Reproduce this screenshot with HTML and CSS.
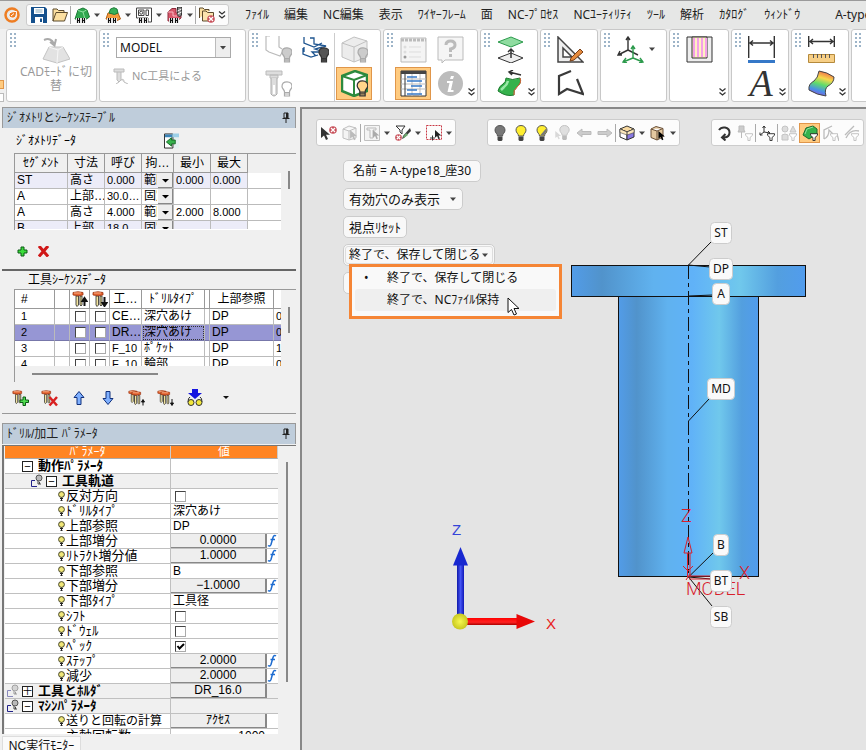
FILE: index.html
```html
<!DOCTYPE html>
<html lang="ja">
<head>
<meta charset="utf-8">
<title>NC MODEL</title>
<link rel="stylesheet" href="styles.css">
</head>
<body>
<svg class="defs" aria-hidden="true">
  <symbol id="chev" viewBox="0 0 7 8"><path d="M.5 .5L3.500 3L6.500 .5M.5 4.500L3.500 7L6.500 4.500" fill="none" stroke="#333" stroke-width="1.300"/></symbol>
  <symbol id="tri" viewBox="0 0 8 8"><path d="M1 2.500H7L4 6Z" fill="#444"/></symbol>
  <symbol id="pin" viewBox="0 0 10 12"><path d="M3 1H7V6H3ZM1.500 6.500H8.500M5 7V11" fill="none" stroke="#222"/><path d="M6 1V6" stroke="#222" stroke-width="2"/></symbol>
  <symbol id="bulb" viewBox="0 0 16 16"><path d="M8 0.500C4.500 .5 3 3 3 5.200C3 8 5.500 8.500 5.500 11H10.500C10.500 8.500 13 8 13 5.200C13 3 11.500 .5 8 .5Z" stroke="#555"/><path d="M5.500 11.500H10.500V15L9.500 16H6.500L5.500 15Z" fill="#444"/></symbol>
  <symbol id="gbulb" viewBox="0 0 12 16"><path d="M6 .8C2.500 .8 1 3 1 5.500C1 8 3.500 8.500 3.500 11V15H8.500V11C8.500 8.500 11 8 11 5.500C11 3 9.500 .8 6 .8ZM3.500 11.500H8.500M3.500 13H8.500" stroke-width="1.200"/></symbol>
  <symbol id="leaf" viewBox="0 0 7 11"><circle cx="3.500" cy="3.500" r="2.900" fill="#f0e678" stroke="#45452a"/><path d="M3.500 6.500V10M2 7.500H5M2.500 9.500H4.500" stroke="#222" fill="none"/></symbol>
  <symbol id="link" viewBox="0 0 14 14"><circle cx="9" cy="4" r="3" fill="#b9b9b9" stroke="#555"/><path d="M8 7V10H11M9.500 8V10" stroke="#444" fill="none"/><path d="M5 6.500H1.500V12.500H7" stroke="currentColor" fill="none"/></symbol>
  <symbol id="hh" viewBox="0 0 16 16"><path d="M3.500 11V16M5.500 11V16M3 13.500H6M8.500 11V16M10.500 11V16M8 13.500H11" stroke="#fff" stroke-width="3"/><path d="M3.500 11V16M5.500 11V16M3 13.500H6M8.500 11V16M10.500 11V16M8 13.500H11" stroke="#111" stroke-width="1.200"/></symbol>
  <symbol id="fold" viewBox="0 0 16 16"><path d="M1 14V2H5L6.500 3.500H12V6M1 14L4 5.500H15.500L12.500 14Z" fill="#fbdfa0" stroke="#5b4a2d" stroke-linejoin="round"/></symbol>
  <symbol id="cur" viewBox="0 0 10 14"><path d="M0 0V11L3 8.500L5 13L7 12L5 7.800H9Z"/></symbol>
  <symbol id="tool" viewBox="0 0 16 16"><path d="M4 5H6.500V14L5 15.500L4 14ZM8 5H10V14L9 15L8 14Z" fill="#f2e4a0" stroke="#222" stroke-width=".8"/><path d="M1 1.500Q6 0 11 1.500V4Q6 5.500 1 4Z" fill="#e5622e" stroke="#9a3412" stroke-width=".8"/><path d="M2 2H9" stroke="#f8b08a"/></symbol>
  <symbol id="fn" viewBox="0 0 10 13"><path d="M9 2Q7 .5 6 3.500L4 10.500Q3 13 1 11.500M3.500 5.500H8" fill="none" stroke="#1c6bd0" stroke-width="1.500"/></symbol>
  <symbol id="funnel" viewBox="0 0 9 9"><path d="M.5 .8H8.500V2.500L5.700 5V8.500H3.300V5L.5 2.500Z" fill="#fff"/></symbol>
  <symbol id="xdot" viewBox="0 0 8 8"><circle cx="4" cy="4" r="3.800" fill="#c8505a"/><path d="M2 2L6 6M6 2L2 6" stroke="#fff" stroke-width="1.300"/></symbol>
</svg>

<div class="app">
<header class="top">
  <svg class="logo" viewBox="0 0 16 16"><circle cx="8" cy="8" r="6.500" fill="none" stroke="#ee7d22" stroke-width="2.500"/><path d="M5 8.500C5 5 8 4.500 12.500 4.500C12.500 8.500 11.500 11 8.500 11C6.500 11 5.500 10 5 8.500ZM7 9L10 6.500" fill="#ee7d22" stroke="#fff"/></svg>
  <div class="bar quick">
    <button class="ib" aria-label="保存"><svg viewBox="0 0 16 16"><path d="M0 0H14L16 2V16H0Z" fill="#14508c"/><path d="M3 1H13V7H3ZM4 10H12V16H4Z" fill="#fff"/><path d="M4.500 3H11.500M4.500 5H11.500" stroke="#8ab"/><path d="M9 11.500H11V15H9Z" fill="#14508c"/></svg></button>
    <button class="ib" aria-label="開く"><svg><use href="#fold"/></svg></button><i class="sep"></i>
    <button class="ib" aria-label="部品"><svg viewBox="0 0 16 16"><path d="M1 12L4 3L9 1L13 3L15.500 10L11 13Z" fill="#2fa84f" stroke="#1c7a36"/><path d="M4 3.500L9 5L12.500 3M9 5L11 12" stroke="#8fe0a0" fill="none"/><use href="#hh"/></svg></button><button class="dd" aria-label="部品の一覧"><svg><use href="#tri"/></svg></button>
    <button class="ib" aria-label="素材"><svg viewBox="0 0 16 16"><path d="M1 12L3 6H13L15.500 12L11 14Z" fill="#f39a3c" stroke="#b3621a"/><path d="M4 6L5.500 2L9 .7L12 2L13 6L9.500 7.500Z" fill="#37b058" stroke="#1c7a36"/><use href="#hh"/></svg></button><button class="dd" aria-label="素材の一覧"><svg><use href="#tri"/></svg></button>
    <button class="ib" aria-label="図面"><svg viewBox="0 0 16 16"><path d="M.5 1H15.500V15H12V11H.5Z" fill="#fff" stroke="#444"/><path d="M2.500 3H8V8.500H2.500ZM10 3H12.500V8.500H10Z" fill="none" stroke="#444"/><circle cx="5.200" cy="5.700" r="1.500" fill="none" stroke="#444"/><use href="#hh"/></svg></button><button class="dd" aria-label="図面の一覧"><svg><use href="#tri"/></svg></button>
    <button class="ib" aria-label="加工"><svg viewBox="0 0 16 16"><path d="M1 5L5 1.500H9V6H14V11L10 14H1Z" fill="#d9576b" stroke="#8c2c3c"/><path d="M1 5H6V9H10" stroke="#f6b8c0" fill="none"/><path d="M10.500 0H14.500V8L12.500 10L10.500 8Z" fill="#888" stroke="#333"/><path d="M10.500 4L14.500 2M10.500 7L14.500 5" stroke="#eee"/><use href="#hh"/></svg></button><button class="dd" aria-label="加工の一覧"><svg><use href="#tri"/></svg></button><i class="sep"></i>
    <button class="ib" aria-label="閉じる"><svg viewBox="0 0 16 16"><path d="M.5 11V1H4L5.500 2.500H10V4" fill="#fbdfa0" stroke="#5b4a2d"/><path d="M3.500 14V4H7L8.500 5.500H14.500V14Z" fill="#fbe3ae" stroke="#5b4a2d"/><use href="#xdot" x="8" y="8" width="8" height="8"/></svg></button>
    <button class="dd" aria-label="その他"><svg><use href="#chev"/></svg></button>
  </div>
  <nav class="menu"><a href="#">ﾌｧｲﾙ</a><a href="#">編集</a><a href="#">NC編集</a><a href="#">表示</a><a href="#">ﾜｲﾔｰﾌﾚｰﾑ</a><a href="#">面</a><a href="#">NC-ﾌﾟﾛｾｽ</a><a href="#">NCﾕｰﾃｨﾘﾃｨ</a><a href="#">ﾂｰﾙ</a><a href="#">解析</a><a href="#">ｶﾀﾛｸﾞ</a><a href="#">ｳｨﾝﾄﾞｳ</a><span class="doc">A-type18_座30</span></nav>
</header>

<div class="ribbon">
  <div class="stub"><i class="on"></i><i></i></div>
  <section class="card c-mode"><i class="grip"></i>
    <button class="mode"><svg viewBox="0 0 28 28"><path d="M7 11H21L28 23L15 27L1 23Z" fill="#e2e2e2" stroke="#c2c2c2"/><path d="M7 11L16 14L21 11M16 14L15 27" fill="none" stroke="#f6f6f6"/><path d="M2 4Q9 1 12 8M8 6L12.500 9.500L14 3" fill="none" stroke="#aaa" stroke-width="2"/></svg><span>CADﾓｰﾄﾞに切<br>替</span></button>
  </section>
  <section class="card c-model"><i class="grip"></i>
    <div class="model">
      <select aria-label="モデル"><option>MODEL</option></select>
      <button class="bytool"><svg viewBox="0 0 16 16"><path d="M1 1H11V4H1ZM4 4V12L6 14L8 12V4M8 12Q11 10 11 14M6 14L3 16M11 14L15 16" fill="#ddd" stroke="#bbb"/></svg><span>NC工具による</span></button>
    </div>
  </section>
  <section class="card c-show"><i class="grip"></i>
    <div class="cells two">
      <button aria-label="軌道表示"><svg viewBox="0 0 27 27"><path d="M1 0V14L4 16L15 20L18 15M1 0H5M14 0V11L17 13" fill="none" stroke="#bbb" stroke-width="1.200"/><use href="#gbulb" x="16" y="11" width="12" height="16" fill="#ccc" stroke="#aaa"/></svg></button>
      <button aria-label="全軌道"><svg viewBox="0 0 27 27"><path d="M2 1V7L12 11L20 7M2 16V11M8 2H12V8L24 10L13 13L22 16L10 16L14 20M1 12V18L9 21L16 19" fill="none" stroke="#1f5590" stroke-width="1.300"/><use href="#gbulb" x="16" y="11" width="12" height="16" fill="#555" stroke="#333"/></svg></button>
      <button aria-label="工具表示"><svg viewBox="0 0 27 27"><path d="M1 1H17V5H1ZM5 5H13V8H5Z" fill="#ddd" stroke="#bbb"/><path d="M6 8V24Q9 28 12 24V8" fill="#ddd" stroke="#aaa"/><path d="M8 15H10V24H8Z" fill="#fff"/><use href="#gbulb" x="16" y="11" width="12" height="16" fill="#fff" stroke="#aaa"/></svg></button>
    </div><i class="vsep"></i>
    <div class="cells">
      <button aria-label="素材表示"><svg viewBox="0 0 27 27"><path d="M1 7L13 1L26 5V21L13 26L1 21Z" fill="#ececec" stroke="#c0c0c0"/><path d="M1 7L13 11L26 5M13 11V26" fill="none" stroke="#c0c0c0"/><use href="#gbulb" x="16" y="11" width="12" height="16" fill="#ccc" stroke="#aaa"/></svg></button>
      <button class="active" aria-label="部品表示"><svg viewBox="0 0 27 27"><path d="M1 6L14 1L26 5V21L13 26L1 21Z" fill="#fff" stroke="#2c8a3e" stroke-width="2.500"/><path d="M1 6L13 10L26 5M13 10V26" fill="none" stroke="#2c8a3e" stroke-width="2"/><use href="#gbulb" x="15" y="10" width="13" height="17" fill="#ffd58a" stroke="#333"/></svg></button>
    </div>
  </section>
  <section class="card c-list"><i class="grip"></i>
    <div class="cells two">
      <button aria-label="一覧"><svg viewBox="0 0 27 27"><path d="M1 2H26V26H1Z" fill="#f4f4f4" stroke="#bbb"/><path d="M1 4H26" stroke="#bbb" stroke-width="3" stroke-dasharray="3 1"/><path d="M9 11H21M9 16H21M9 21H21" stroke="#ddd"/><circle cx="5" cy="11" r="1.500" fill="#ddd"/><circle cx="5" cy="16" r="1.500" fill="#ddd"/><circle cx="5" cy="21" r="1.500" fill="#999"/></svg></button>
      <button aria-label="ヘルプ"><svg viewBox="0 0 27 27"><path d="M1 1H26V24H8L5 27V24H1Z" fill="#f5f5f5" stroke="#bbb"/><path d="M9 9Q9 5 13.500 5Q18 5 18 9Q18 12 13.500 13V16" fill="none" stroke="#bbb" stroke-width="3"/><path d="M12 18H15V21H12Z" fill="#bbb"/></svg></button>
      <button class="active" aria-label="表"><svg viewBox="0 0 27 27"><path d="M1 1H26V26H1Z" fill="#fff" stroke="#333"/><path d="M1 2.500H26" stroke="#444" stroke-width="3"/><path d="M1 9H26M1 14H26M1 19H26M12 4V26M20 4V26" stroke="#bbb"/><path d="M5 4V26" stroke="#333"/><path d="M7 7H17M7 11H22M11 16H22M7 20H17M7 24H22" stroke="#3578c8" stroke-width="1.500"/></svg></button>
      <button aria-label="情報"><svg viewBox="0 0 27 27"><circle cx="13.500" cy="13.500" r="12.500" fill="#bcbcbc"/><path d="M14 6H17L16 9H13ZM10 11H16L14 20H16.500V22H10.500L12.500 13H10Z" fill="#fff"/></svg></button>
    </div><svg class="chev"><use href="#chev"/></svg>
  </section>
  <section class="card c-s"><i class="grip"></i>
    <div class="cells">
      <button aria-label="面"><svg viewBox="0 0 27 27"><path d="M1 6L14 1L26 6L14 11Z" fill="#8fdca0" stroke="#2c9a4c"/><path d="M1 22L14 17L26 22L14 27Z" fill="#eee" stroke="#333"/><path d="M14 22V13M11 16L14 13L17 16" fill="none" stroke="#333" stroke-width="1.500"/></svg></button>
      <button aria-label="曲面"><svg viewBox="0 0 27 27"><path d="M9 8Q15 11 23 8Q25 13 20 17Q16 20 17 25Q9 27 1 21Q2 16 6 14Q9 12 9 8Z" fill="#35b24c" stroke="#1c7a2e"/><path d="M11 11Q10 15 7 17L4 20" fill="none" stroke="#9ae8a8" stroke-width="2.500"/><path d="M12 2L24 5M16 0L12 2L15 5" fill="none" stroke="#333" stroke-width="1.500"/><path d="M23 8Q25 13 20 17Q16 20 17 25" fill="none" stroke="#e5603a"/></svg></button>
    </div><svg class="chev"><use href="#chev"/></svg>
  </section>
  <section class="card c-s"><i class="grip"></i>
    <div class="cells">
      <button aria-label="スケッチ"><svg viewBox="0 0 27 27"><path d="M1 1L26 26H1Z" fill="#eee" stroke="#444" stroke-width="1.500"/><path d="M6 12L15 21H6Z" fill="#fff" stroke="#444" stroke-width="1.500"/><path d="M14 22L23 13L26 16L17 24L13 25Z" fill="#e58a3c" stroke="#7a3e14"/></svg></button>
      <button aria-label="折れ線"><svg viewBox="0 0 27 27"><path d="M14 1L2 6V24L10 19L26 24L20 9" fill="none" stroke="#3a3a3a" stroke-width="2.200"/></svg></button>
    </div>
  </section>
  <section class="card c-axis"><i class="grip"></i>
    <div class="cells"><button aria-label="座標系"><svg viewBox="0 0 27 27"><path d="M11 14V1M11 14L1 19M11 14L21 19M9 4L11 1L13 4M3 15L1 19L5 19" fill="none" stroke="#333" stroke-width="1.400"/><path d="M16 22V10M16 22L6 26M16 22L26 26M14 13L16 10L18 13M9 22L6 26L10 27M23 22L26 26L22 27" fill="none" stroke="#2c9a4c" stroke-width="1.400"/></svg></button></div>
    <svg class="tri"><use href="#tri"/></svg>
  </section>
  <section class="card c-m"><i class="grip"></i>
    <div class="cells"><button aria-label="ポケット"><svg viewBox="0 0 27 27"><path d="M1 1H26V26H1Z" fill="#eee" stroke="#333"/><path d="M6 1H21V22H6Z" fill="#fff0c0" stroke="#333"/><path d="M8 2V21M12 2V21M16 2V21M20 2V21" stroke="#f4a0e8" stroke-width="2"/></svg></button></div>
    <svg class="chev"><use href="#chev"/></svg>
  </section>
  <section class="card c-s"><i class="grip"></i>
    <div class="cells">
      <button aria-label="寸法"><svg viewBox="0 0 27 27"><path d="M.7 0V22M26.300 0V22M2 7H25M5 4.500L2 7L5 9.500M22 4.500L25 7L22 9.500" fill="none" stroke="#333" stroke-width="1.400"/><path d="M0 25.500H27" stroke="#3578c8" stroke-width="3"/></svg></button>
      <button class="glyph" aria-label="文字">A</button>
    </div><svg class="chev"><use href="#chev"/></svg>
  </section>
  <section class="card c-s"><i class="grip"></i>
    <div class="cells">
      <button aria-label="測定"><svg viewBox="0 0 27 27"><path d="M.7 0V11M26.300 0V11M2 5.500H25M5 3L2 5.500L5 8M22 3L25 5.500L22 8" fill="none" stroke="#333" stroke-width="1.400"/><path d="M.5 18.500H26.500V26.500H.5Z" fill="#f7cf86" stroke="#b58a3c"/><path d="M5.500 18V22M9.500 18V22M13.500 18V22M17.500 18V22M21.500 18V22" stroke="#555"/></svg></button>
      <button aria-label="曲率"><svg viewBox="0 0 27 27"><defs><linearGradient id="rb" x1=".7" y1="0" x2=".4" y2="1"><stop offset="0" stop-color="#f0604a"/><stop offset=".3" stop-color="#f6d84c"/><stop offset=".55" stop-color="#5fdc6a"/><stop offset=".8" stop-color="#4a90e8"/><stop offset="1" stop-color="#8a5ad8"/></linearGradient></defs><path d="M11 1Q19 2 26 7Q26 13 20 16Q16 19 18 26Q9 25 1 20Q0 14 6 11Q10 8 11 1Z" fill="url(#rb)" stroke="#444"/></svg></button>
    </div><svg class="chev"><use href="#chev"/></svg>
  </section>
  <section class="card c-s"><i class="grip"></i></section>
</div>

<main class="work">
<aside class="side">
  <h2 class="phead"><span>ｼﾞｵﾒﾄﾘとｼｰｹﾝｽﾃｰﾌﾞﾙ</span><svg><use href="#pin"/></svg></h2>
  <div class="geo">
    <div class="cap"><span>ｼﾞｵﾒﾄﾘﾃﾞｰﾀ</span><button aria-label="取込"><svg viewBox="0 0 16 16"><path d="M9 4H16V16H10Z" fill="#e4f0f0"/><path d="M.5 .5H9.500V15.500H.5Z" fill="#fff" stroke="#222"/><path d="M1 1H9V4H1Z" fill="#3c84b8"/><path d="M9 0H16V4H9Z" fill="#9cd0e8"/><path d="M2.500 9L8 4.500V7H12V11H8V13.500Z" fill="#35b24c" stroke="#156b28"/></svg></button></div>
    <div class="gridbox g1">
      <div class="clip">
      <table class="grid">
        <colgroup><col class="w53"><col class="w37"><col class="w37"><col class="w32"><col class="w37"><col class="w37"><col></colgroup>
        <thead><tr><th>ｾｸﾞﾒﾝﾄ</th><th>寸法</th><th>呼び</th><th>拘…</th><th>最小</th><th>最大</th><th></th></tr></thead>
        <tbody>
          <tr class="alt"><td>ST</td><td>高さ</td><td class="n">0.000</td><td><select aria-label="拘束 1"><option>範囲</option></select></td><td class="n">0.000</td><td class="n">0.000</td><td class="e"></td></tr>
          <tr><td>A</td><td>上部…</td><td class="n">30.0…</td><td><select aria-label="拘束 2"><option>固定</option></select></td><td></td><td></td><td></td></tr>
          <tr><td>A</td><td>高さ</td><td class="n">4.000</td><td><select aria-label="拘束 3"><option>範囲</option></select></td><td class="n">2.000</td><td class="n">8.000</td><td></td></tr>
          <tr class="alt"><td>B</td><td>上部</td><td class="n">18.0…</td><td><select aria-label="拘束 4"><option>固定</option></select></td><td></td><td></td><td class="e"></td></tr>
        </tbody>
      </table></div><i class="vthumb"></i>
    </div>
    <div class="ops">
      <button aria-label="追加"><svg viewBox="0 0 11 11"><path d="M4 1H7V4H10V7H7V10H4V7H1V4H4Z" fill="#3bdc3b" stroke="#0a5a14"/></svg></button>
      <button aria-label="削除"><svg viewBox="0 0 11 11"><path d="M1 0L10 10.500M10 0L1 10.500" stroke="#d01818" stroke-width="3"/></svg></button>
    </div>
  </div>
  <div class="seq">
    <div class="cap c2"><span>工具ｼｰｹﾝｽﾃﾞｰﾀ</span></div>
    <div class="gridbox g2">
      <div class="clip">
      <table class="grid">
        <colgroup><col class="w40"><col class="w15"><col class="w20"><col class="w20"><col class="w32"><col class="w63"><col class="w5"><col class="w64"><col></colgroup>
        <thead><tr><th class="l">#</th><th></th>
          <th><svg class="ti" viewBox="0 0 16 16"><use href="#tool"/><path d="M12.500 15V9M10.500 10L12.500 7L14.500 10Z" stroke="#111" stroke-width="2" fill="#111"/></svg></th>
          <th><svg class="ti" viewBox="0 0 16 16"><use href="#tool"/><path d="M12.500 6V12M10.500 12L12.500 15L14.500 12Z" stroke="#111" stroke-width="2" fill="#111"/></svg></th>
          <th>工…</th><th>ﾄﾞﾘﾙﾀｲﾌﾟ</th><th></th><th>上部参照</th><th></th></tr></thead>
        <tbody>
          <tr><td class="n">1</td><td></td><td><input type="checkbox" aria-label="1 上"></td><td><input type="checkbox" aria-label="1 下"></td><td>CE…</td><td>深穴あけ</td><td></td><td>DP</td><td class="n">0</td></tr>
          <tr class="sel"><td class="n">2</td><td></td><td><input type="checkbox" aria-label="2 上"></td><td><input type="checkbox" aria-label="2 下"></td><td>DR…</td><td class="focus">深穴あけ</td><td></td><td>DP</td><td class="n">0</td></tr>
          <tr><td class="n">3</td><td></td><td><input type="checkbox" aria-label="3 上"></td><td><input type="checkbox" aria-label="3 下"></td><td class="n">F_10</td><td>ﾎﾟｹｯﾄ</td><td></td><td>DP</td><td class="n">1</td></tr>
          <tr><td class="n">4</td><td></td><td><input type="checkbox" aria-label="4 上"></td><td><input type="checkbox" aria-label="4 下"></td><td class="n">F_10</td><td>輪部</td><td></td><td>DP</td><td class="n">0</td></tr>
        </tbody>
      </table></div><i class="vthumb"></i><i class="hthumb"></i>
    </div>
    <div class="tools">
      <button aria-label="工具追加"><svg viewBox="0 0 16 16"><use href="#tool" x="-1" width="14" height="14"/><path d="M10 7H12.500V10H15.500V12.500H12.500V15.500H10V12.500H7V10H10Z" fill="#4fdc4f" stroke="#0a5a14"/></svg></button>
      <button aria-label="工具削除"><svg viewBox="0 0 16 16"><use href="#tool" x="-1" width="14" height="14"/><path d="M7.500 7L15 15.500M15 7L7.500 15.500" stroke="#d82020" stroke-width="2.500"/></svg></button>
      <button aria-label="上へ"><svg viewBox="0 0 16 16"><path d="M8 1.500L13 7.500H10V14.500H6V7.500H3Z" fill="#7fb0ff" stroke="#10307c"/></svg></button>
      <button aria-label="下へ"><svg viewBox="0 0 16 16"><path d="M8 14.500L13 8.500H10V1.500H6V8.500H3Z" fill="#7fb0ff" stroke="#10307c"/></svg></button>
      <button aria-label="前へ"><svg viewBox="0 0 16 16"><use href="#tool" x="-1" width="13" height="13"/><use href="#tool" x="2" y="1" width="14" height="14"/><path d="M14 15.500V12M12.500 12L14 9.500L15.500 12Z" fill="#111" stroke="#111"/></svg></button>
      <button aria-label="後へ"><svg viewBox="0 0 16 16"><use href="#tool" x="-1" width="13" height="13"/><use href="#tool" x="2" y="1" width="14" height="14"/><path d="M14 9V13M12.500 13L14 15.500L15.500 13Z" fill="#111" stroke="#111"/></svg></button>
      <button aria-label="確認"><svg viewBox="0 0 16 16"><path d="M5 -1H11V3H15L8 9L1 3H5Z" fill="#1414e0"/><path d="M1 12Q1 8 3 7M15 12Q15 8 13 7" stroke="#222" fill="none"/><circle cx="4" cy="12.500" r="3" fill="#f2e83c" stroke="#333"/><circle cx="12" cy="12.500" r="3" fill="#f2e83c" stroke="#333"/></svg></button>
      <button aria-label="その他の操作"><svg viewBox="0 0 16 16"><path d="M7 6H13L10 9Z" fill="#111"/></svg></button>
    </div>
  </div>
  <h2 class="phead p2"><span>ﾄﾞﾘﾙ/加工 ﾊﾟﾗﾒｰﾀ</span><svg><use href="#pin"/></svg></h2>
  <div class="pbox">
    <table class="params">
      <colgroup><col><col class="w107"></colgroup>
      <thead><tr><th>ﾊﾟﾗﾒｰﾀ</th><th>値</th></tr></thead>
      <tbody>
        <tr><td><div class="r l1"><i class="lk"></i><button class="box" aria-label="閉じる">−</button><b>動作ﾊﾟﾗﾒｰﾀ</b></div></td><td></td></tr>
        <tr class="g"><td><div class="r l2"><svg class="lk"><use href="#link"/></svg><button class="box" aria-label="閉じる">−</button><b>工具軌道</b></div></td><td></td></tr>
        <tr><td><div class="r l3"><svg><use href="#leaf"/></svg><label for="p1">反対方向</label></div></td><td><input id="p1" type="checkbox"></td></tr>
        <tr><td><div class="r l3"><svg><use href="#leaf"/></svg>ﾄﾞﾘﾙﾀｲﾌﾟ</div></td><td>深穴あけ</td></tr>
        <tr><td><div class="r l3"><svg><use href="#leaf"/></svg>上部参照</div></td><td>DP</td></tr>
        <tr><td><div class="r l3"><svg><use href="#leaf"/></svg>上部増分</div></td><td><div class="v"><button>0.0000</button><svg><use href="#fn"/></svg></div></td></tr>
        <tr><td><div class="r l3"><svg><use href="#leaf"/></svg>ﾘﾄﾗｸﾄ増分値</div></td><td><div class="v"><button>1.0000</button><svg><use href="#fn"/></svg></div></td></tr>
        <tr><td><div class="r l3"><svg><use href="#leaf"/></svg>下部参照</div></td><td>B</td></tr>
        <tr><td><div class="r l3"><svg><use href="#leaf"/></svg>下部増分</div></td><td><div class="v"><button>−1.0000</button><svg><use href="#fn"/></svg></div></td></tr>
        <tr><td><div class="r l3"><svg><use href="#leaf"/></svg>下部ﾀｲﾌﾟ</div></td><td>工具径</td></tr>
        <tr><td><div class="r l3"><svg><use href="#leaf"/></svg><label for="p2">ｼﾌﾄ</label></div></td><td><input id="p2" type="checkbox"></td></tr>
        <tr><td><div class="r l3"><svg><use href="#leaf"/></svg><label for="p3">ﾄﾞｳｪﾙ</label></div></td><td><input id="p3" type="checkbox"></td></tr>
        <tr><td><div class="r l3"><svg><use href="#leaf"/></svg><label for="p4">ﾍﾟｯｸ</label></div></td><td><input id="p4" type="checkbox" checked></td></tr>
        <tr><td><div class="r l3"><svg><use href="#leaf"/></svg>ｽﾃｯﾌﾟ</div></td><td><div class="v"><button>2.0000</button><svg><use href="#fn"/></svg></div></td></tr>
        <tr><td><div class="r l3"><svg><use href="#leaf"/></svg>減少</div></td><td><div class="v"><button>2.0000</button><svg><use href="#fn"/></svg></div></td></tr>
        <tr class="g"><td><div class="r l1"><svg class="lk dim"><use href="#link"/></svg><button class="box" aria-label="開く">＋</button><b>工具とﾎﾙﾀﾞ</b></div></td><td><div class="v"><button>DR_16.0</button></div></td></tr>
        <tr class="g"><td><div class="r l1"><svg class="lk"><use href="#link"/></svg><button class="box" aria-label="閉じる">−</button><b>ﾏｼﾝﾊﾟﾗﾒｰﾀ</b></div></td><td></td></tr>
        <tr><td><div class="r l3 long"><svg><use href="#leaf"/></svg>送りと回転の計算</div></td><td><div class="v"><button>ｱｸｾｽ</button></div></td></tr>
        <tr><td><div class="r l3"><i class="nob"></i>主軸回転数</div></td><td class="num">1000</td></tr>
      </tbody>
    </table>
    <i class="pthumb"></i>
  </div>
  <div class="tabs"><button>NC実行ﾓﾆﾀｰ</button></div>
</aside>

<section class="view">
  <svg class="scene" viewBox="302 109 564 641">
    <defs>
      <linearGradient id="cyl"><stop offset="0" stop-color="#529ce8"/><stop offset=".13" stop-color="#5193cb"/><stop offset=".35" stop-color="#60b2ef"/><stop offset=".52" stop-color="#60b2f8"/><stop offset=".72" stop-color="#70c8ec"/><stop offset=".88" stop-color="#539fdf"/><stop offset="1" stop-color="#519ced"/></linearGradient>
      <linearGradient id="bl"><stop offset="0" stop-color="#1018a8"/><stop offset=".5" stop-color="#4454f4"/><stop offset="1" stop-color="#1018b8"/></linearGradient>
      <linearGradient id="rd" x2="0" y2="1"><stop offset="0" stop-color="#f00"/><stop offset=".6" stop-color="#f22"/><stop offset="1" stop-color="#a00"/></linearGradient>
      <radialGradient id="yl"><stop offset="0" stop-color="#f8f850"/><stop offset="1" stop-color="#c8c820"/></radialGradient>
    </defs>
    <rect x="618.500" y="296.500" width="140" height="280" fill="url(#cyl)" stroke="#111"/>
    <rect x="571.500" y="265.500" width="234" height="31" fill="url(#cyl)" stroke="#111"/>
    <path d="M688.500 265V577" stroke="#111" stroke-dasharray="14 4 4 4"/>
    <path d="M688.500 265L711 242M688.500 265L710 267M688.500 296L713 295M688.500 421L709 399M688.500 577L713 553M688.500 577L711 579M688.500 577L712 606" stroke="#111" fill="none"/>
    <g fill="none" stroke="#d8202c"><path d="M684 553L688 537L692 553ZM687.500 553V577M690 553V577M683 566L688 571L693 566M686 580L690 574M689 576H712M689 579H712"/></g>
    <g class="mtext"><text x="681" y="522">Z</text><text x="739" y="579">X</text><text x="686" y="595">MODEL</text></g>
    <g fill="#fafafa" stroke="#ccc"><rect x="710.500" y="222.500" width="21" height="21" rx="4"/><rect x="709.500" y="258.500" width="23" height="21" rx="4"/><rect x="712.500" y="283.500" width="17" height="21" rx="4"/><rect x="707.500" y="378.500" width="27" height="21" rx="4"/><rect x="713.500" y="534.500" width="15" height="21" rx="4"/><rect x="710.500" y="570.500" width="21" height="21" rx="4"/><rect x="710.500" y="606.500" width="21" height="21" rx="4"/></g>
    <g class="ltext"><text x="721" y="237">ST</text><text x="721" y="273">DP</text><text x="721" y="298">A</text><text x="721" y="393">MD</text><text x="721" y="549">B</text><text x="721" y="585">BT</text><text x="721" y="621">SB</text></g>
    <rect x="457" y="564" width="7" height="52" fill="url(#bl)"/><path d="M460.500 547L468 565.500H453Z" fill="#1828d0"/>
    <rect x="466" y="618" width="51" height="7" fill="url(#rd)"/><path d="M535 621.500L516.500 614V629Z" fill="#e80808"/>
    <circle cx="460" cy="621.500" r="8" fill="url(#yl)"/>
    <g class="ax"><text x="452" y="535" fill="#3444d8">Z</text><text x="546" y="629" fill="#e82020">X</text></g>
  </svg>
  <div class="bars">
    <div class="bar">
      <button class="ib" aria-label="選択解除"><svg viewBox="0 0 16 16"><use href="#cur" y="2" width="10" height="14" fill="#333"/><use href="#xdot" x="8" y="1" width="8" height="8"/></svg></button>
      <button class="ib" aria-label="立体選択"><svg viewBox="0 0 16 16"><path d="M1 4L7 1L14 3V13L7 15L1 13ZM1 4L7 6L14 3M7 6V15" fill="#f4f4f4" stroke="#c0c0c0"/><use href="#cur" x="8" y="5" width="8" height="11" fill="#bbb"/></svg></button><i class="sep"></i>
      <button class="ib" aria-label="工具選択"><svg viewBox="0 0 16 16"><path d="M.5 .5H15.500V15.500H.5Z" fill="#f4f4f4" stroke="#c0c0c0"/><path d="M3 3H12V5H9V13H6V5H3Z" fill="none" stroke="#bbb"/><use href="#cur" x="9" y="5" width="7" height="10" fill="#aaa"/></svg></button><button class="dd" aria-label="工具選択の一覧"><svg><use href="#tri"/></svg></button>
      <button class="ib" aria-label="フィルタ"><svg viewBox="0 0 16 16"><path d="M1 1H10L7 5V9L5 7V5Z" fill="#fff" stroke="#333"/><path d="M15 3L16 6L9 13L7 14L8 11Z" fill="#3a3a3a"/><path d="M11 8L13 10L9 13L8 12Z" fill="#6ca86c"/><use href="#xdot" x="0" y="9" width="7" height="7"/></svg></button><button class="dd" aria-label="フィルタの一覧"><svg><use href="#tri"/></svg></button>
      <button class="ib" aria-label="範囲選択"><svg viewBox="0 0 16 16"><path d="M.5 .5H15.500V14.500H.5Z" fill="none" stroke="#c83844" stroke-dasharray="2 1"/><path d="M4 13H9M6.500 10.500V15.500" stroke="#333"/><use href="#cur" x="9" y="5" width="7" height="10" fill="#222"/></svg></button><button class="dd" aria-label="範囲選択の一覧"><svg><use href="#tri"/></svg></button>
    </div>
    <div class="bar">
      <button class="ib" aria-label="消灯"><svg fill="#777"><use href="#bulb"/></svg></button>
      <button class="ib" aria-label="点灯"><svg fill="#ffee30"><use href="#bulb"/></svg></button>
      <button class="ib" aria-label="反転"><svg viewBox="0 0 16 16"><use href="#bulb" width="16" height="16" fill="#ffee30"/><path d="M12.500 3L6 10.500H10.500Q10.500 8 12.500 6.500Z" fill="#777"/></svg></button>
      <button class="ib" aria-label="選択点灯"><svg viewBox="0 0 16 16"><g opacity=".35"><use href="#bulb" x="2" width="15" height="15" fill="#aaa"/><use href="#cur" y="6" width="7" height="9" fill="#999"/></g></svg></button>
      <button class="ib" aria-label="戻る"><svg viewBox="0 0 16 16"><path d="M1 8L6 4V6.500H15V9.500H6V12Z" fill="#ccc" stroke="#bbb"/></svg></button>
      <button class="ib" aria-label="進む"><svg viewBox="0 0 16 16"><path d="M15 8L10 4V6.500H1V9.500H10V12Z" fill="#ccc" stroke="#bbb"/></svg></button><i class="sep"></i>
      <button class="ib" aria-label="視点"><svg viewBox="0 0 16 16"><path d="M1 4L8 1L15 4L8 7Z" fill="#f7d9a0" stroke="#333"/><path d="M1 4V12L8 15V7Z" fill="#fff" stroke="#333"/><path d="M15 4V12L8 15V7Z" fill="#8878e0" stroke="#333"/><path d="M1 4L8 7V10L1 7.500ZM15 4V7.500L8 10V7Z" fill="#fbe8bc" stroke="#333" stroke-width=".5"/></svg></button><button class="dd" aria-label="視点の一覧"><svg><use href="#tri"/></svg></button>
      <button class="ib" aria-label="面選択"><svg viewBox="0 0 16 16"><path d="M1 4L6 1.500L13 3.500V12L7 15L1 12.500ZM1 4L7 6L13 3.500M7 6V15" fill="#e4c8a0" stroke="#6b5138"/><use href="#cur" x="8" y="6" width="8" height="10" fill="#000"/></svg></button><button class="dd" aria-label="面選択の一覧"><svg><use href="#tri"/></svg></button>
    </div>
    <div class="bar">
      <button class="ib" aria-label="再実行"><svg viewBox="0 0 16 16"><path d="M3 5Q5 2 9 2.500Q13.500 3.500 13.500 7.500Q13.500 12 8.500 12.500H7M9.500 9L6 12.500L9.500 15.500" fill="none" stroke="#333" stroke-width="2"/></svg></button>
      <button class="ib" aria-label="固定"><svg viewBox="0 0 16 16"><path d="M2 1H7V5L8 7H1L2 5ZM4.500 7V13" fill="#ccc" stroke="#bbb"/><use href="#funnel" x="8" y="8" width="8" height="8" stroke="#bbb"/></svg></button><i class="sep"></i>
      <button class="ib" aria-label="軸フィルタ"><svg viewBox="0 0 16 16"><path d="M5 7V1M5 7L1 10M5 7L11 8M3.500 3L5 1L6.500 3M1 7.500V10H3.500M9 6L11 8L9 9.500" fill="none" stroke="#333"/><use href="#funnel" x="8" y="8" width="8" height="8" stroke="#222"/></svg></button><i class="sep"></i>
      <button class="ib" aria-label="形状フィルタ"><svg viewBox="0 0 16 16"><circle cx="4" cy="4" r="3" fill="#ddd" stroke="#c4c4c4"/><path d="M12 1L15 7H9ZM1 10L4 9L7 10V15H1Z" fill="#ddd" stroke="#c4c4c4"/><use href="#funnel" x="8" y="8" width="8" height="8" stroke="#bbb"/></svg></button>
      <button class="ib active" aria-label="面フィルタ"><svg viewBox="0 0 16 16"><path d="M1 10L4 3L11 1L15 4V9L7 14Z" fill="#35b24c" stroke="#1c6b2e"/><path d="M3 9L5 4L11 2" fill="none" stroke="#90e0a0"/><use href="#funnel" x="8" y="8" width="8" height="8" stroke="#222"/></svg></button>
      <button class="ib" aria-label="線フィルタ"><svg viewBox="0 0 16 16"><path d="M1 14V5L9 1M1 14Q6 12 6 5L10 9M14 9L16 16" fill="none" stroke="#bbb" stroke-width="1.300"/><use href="#funnel" x="7" y="8" width="8" height="8" stroke="#bbb"/></svg></button>
      <button class="ib" aria-label="曲線フィルタ"><svg viewBox="0 0 16 16"><path d="M1 10L10 1M2 13Q6 4 15 6" fill="none" stroke="#bbb" stroke-width="1.300"/><use href="#funnel" x="7" y="8" width="8" height="8" stroke="#bbb"/></svg></button>
    </div>
  </div>
  <div class="opts">
    <button class="pill name">名前 = A-type18_座30</button>
    <button class="pill plain">有効穴のみ表示<svg><use href="#tri"/></svg></button>
    <button class="pill plain">視点ﾘｾｯﾄ</button>
    <div class="drop">
      <button class="pill open">終了で、保存して閉じる<svg><use href="#tri"/></svg></button>
      <ul class="pop" role="menu">
        <li role="menuitemradio" aria-checked="true"><i>•</i>終了で、保存して閉じる</li>
        <li role="menuitemradio" aria-checked="false" class="hover"><i></i>終了で、NCﾌｧｲﾙ保持</li>
      </ul>
      <svg class="pointer" viewBox="0 0 13 19"><path d="M1 1V15.500L4.500 12.500L7 18L9.500 17L7 11.500H12Z" fill="#fff" stroke="#111"/></svg>
    </div>
    <button class="pill" aria-label="次の操作">&nbsp;</button>
  </div>
</section>
</main>
</div>
</body>
</html>
```

FILE: styles.css
```css
* { box-sizing: border-box; }
body { margin: 0; background: #f0f0f0; color: #111; font: 12px/16px "Noto Sans", "Noto Sans CJK JP", sans-serif; }
button, select, input { font: inherit; color: inherit; margin: 0; padding: 0; }
button { background: none; border: 0; display: block; }
svg { display: block; }
i { font-style: normal; }
.defs { position: absolute; width: 0; height: 0; }
.app { height: 100vh; display: flex; flex-direction: column; overflow: hidden; }

/* title row */
.top { flex: none; height: 29px; border-top: 1px solid #9a9a9a; background: #e6e7e6; display: flex; align-items: center; padding-left: 4px; overflow: hidden; }
.logo { width: 16px; height: 16px; flex: none; margin-right: 6px; }
.bar { display: flex; align-items: center; flex: none; background: #fcfcfc; border: 1px solid #ccc; border-radius: 3px; padding: 0 1px; }
.quick { height: 22px; margin-right: 16px; }
.ib { width: 21px; height: 20px; display: flex; align-items: center; justify-content: center; flex: none; }
.ib svg { width: 16px; height: 16px; }
.ib.active { background: #ffcb80; border: 1px solid #e0964a; }
.dd { width: 10px; height: 20px; display: flex; align-items: center; justify-content: center; flex: none; }
.dd svg { width: 8px; height: 8px; }
.sep { width: 1px; height: 18px; background: #aaa; flex: none; }
.menu { display: flex; gap: 15px; white-space: nowrap; color: #222; }
.menu a { color: inherit; text-decoration: none; }
.doc { margin-left: 20px; }

/* ribbon */
.ribbon { flex: none; height: 78px; display: flex; gap: 2px; align-items: flex-start; overflow: hidden; }
.stub { width: 4px; padding-top: 51px; flex: none; }
.stub i { display: block; height: 9px; border: 1px solid #bbb; border-left: 0; background: #fff; margin-bottom: 4px; }
.stub .on { background: #ffcb80; border-color: #e0964a; }
.card { flex: none; height: 73px; background: #fff; border: 1px solid #c8c8c8; border-radius: 3px; padding: 3px 2px 0 3px; display: flex; overflow: hidden; }
.grip { width: 6px; height: 15px; margin-right: 2px; flex: none; background: repeating-linear-gradient(#fff0 0 2px, #fff 2px 4px), repeating-linear-gradient(90deg, #9db4c8 0 2px, #fff 2px 4px); }
.c-mode { width: 91px; }
.c-model { width: 147px; }
.c-show { width: 133px; }
.c-list { width: 95px; }
.c-s { width: 58px; }
.c-axis { width: 67px; }
.c-m { width: 60px; }
.mode { color: #999; line-height: 14px; padding-top: 3px; flex: 1; display: flex; flex-direction: column; align-items: center; justify-content: flex-start; white-space: nowrap; }
.mode svg { width: 28px; height: 28px; margin-bottom: 1px; }
.model { flex: 1; padding: 4px 12px 0 5px; }
.model select { appearance: none; width: 100%; height: 21px; border: 1px solid #aaa; border-radius: 0; padding-left: 3px; background: url("data:image/svg+xml,%3Csvg xmlns='http://www.w3.org/2000/svg' width='15' height='19'%3E%3Cpath d='M0 0H15V19H0Z' fill='%23eee'/%3E%3Cpath d='M.5 0V19' stroke='%23bbb'/%3E%3Cpath d='M5 8H11L8 11.500Z' fill='%23444'/%3E%3C/svg%3E") right center no-repeat #fff; }
.bytool { display: flex; align-items: center; gap: 3px; color: #999; font-size: 11px; margin: 10px 0 0 -3px; white-space: nowrap; }
.bytool svg { width: 16px; height: 16px; }
.cells { display: grid; grid-template-columns: 36px; grid-auto-rows: 33px; gap: 1px; align-content: start; }
.cells.two { grid-template-columns: 36px 36px; }
.cells button { display: flex; align-items: center; justify-content: center; }
.cells svg { width: 27px; height: 27px; }
.cells .active { background: #ffcb80; border: 1px solid #e0964a; }
.cells .glyph { font: italic 38px/33px "Liberation Serif", serif; color: #333; }
.vsep { width: 1px; height: 68px; background: #ccc; margin: 0 1px; }
.chev { width: 7px; height: 8px; margin: 55px 0 0 auto; flex: none; }
.tri { width: 8px; height: 8px; margin-top: 12px; flex: none; }

/* side panels */
.work { flex: 1; min-height: 0; display: flex; }
.side { width: 300px; flex: none; padding: 0 4px 0 2px; display: flex; flex-direction: column; font-family: "Liberation Sans", "Noto Sans CJK JP", sans-serif; color: #000; }
.phead { margin: 0; height: 21px; flex: none; background: #bfcddb; border: 1px solid #999; border-bottom: 0; display: flex; justify-content: space-between; align-items: center; padding: 0 4px; font-size: 12px; font-weight: 400; color: #222; }
.phead svg { width: 10px; height: 12px; }
.cap { display: flex; height: 25px; align-items: center; padding-left: 14px; gap: 88px; }
.cap svg { width: 15px; height: 16px; }
.gridbox { margin-left: 12px; border: solid #999; border-width: 1px 0 0 1px; position: relative; }
.clip { width: 266px; overflow: hidden; }
.g1 .clip { height: 76px; border-bottom: 1px solid #fff; }
.g2 { height: 93px; }
.g2 .clip { height: 76px; }
.grid { width: 100%; table-layout: fixed; border-collapse: separate; border-spacing: 0; }
.grid th, .grid td { border: solid #bbb; border-width: 0 1px 1px 0; padding: 0 0 0 2px; height: 16px; line-height: 15px; overflow: hidden; white-space: nowrap; background: #fff; text-align: left; font-weight: 400; }
.grid th { height: 19px; background: #f0f0f0; padding: 0; text-align: center; border-color: #999; }
.g2 th { background: #fff; }
.g1 th:last-child { border-color: transparent; }
.grid tr > :last-child { border-right: 0; }
.grid th.l { text-align: left; padding-left: 6px; }
.g2 td:first-child { padding-left: 6px; }
.grid .n { font-size: 11px; }
.grid .alt td { background: #ececf8; }
.grid .alt .e { background: #fff; }
.grid .sel td { background: #9696d4; border-bottom-color: #77a; }
.grid .focus { outline: 1px dotted #333; outline-offset: -2px; }
.grid select { appearance: none; display: block; width: 29px; height: 15px; border: 0; border-radius: 0; overflow: hidden; background: url("data:image/svg+xml,%3Csvg xmlns='http://www.w3.org/2000/svg' width='15' height='15'%3E%3Cpath d='M0 0H15V15H0Z' fill='%23eee'/%3E%3Cpath d='M14.500 0V14.500H0' fill='none' stroke='%23888'/%3E%3Cpath d='M4 6H11L7.500 9.500Z'/%3E%3C/svg%3E") right center no-repeat transparent; padding-right: 16px; }
input[type="checkbox"] { appearance: none; display: block; width: 11px; height: 11px; background: #fff; border: 1px solid #444; border-right-color: #aaa; border-bottom-color: #aaa; }
.grid input { margin: 0 auto; }
.params input:checked { background: url("data:image/svg+xml,%3Csvg xmlns='http://www.w3.org/2000/svg' width='9' height='9'%3E%3Cpath d='M1.500 4L3.500 6.500L8 2' fill='none' stroke='%23000' stroke-width='2'/%3E%3C/svg%3E") center no-repeat #fff; }
.ti { width: 16px; height: 16px; margin: 0 auto; }
.w5 { width: 5px; } .w15 { width: 15px; } .w20 { width: 20px; } .w32 { width: 32px; } .w37 { width: 37px; }
.w40 { width: 40px; } .w53 { width: 53px; } .w63 { width: 63px; } .w64 { width: 64px; } .w107 { width: 107px; }
.vthumb { position: absolute; right: 6px; top: 17px; width: 2px; height: 18px; background: #888; }
.g2 .vthumb { height: 26px; }
.hthumb { position: absolute; left: 17px; bottom: 7px; width: 126px; height: 2px; background: #888; }
.ops { display: flex; gap: 10px; padding: 16px 0 12px 15px; border-bottom: 2px solid #666; }
.ops svg { width: 11px; height: 11px; }
.c2 { height: 18px; padding-left: 26px; }
.seq { height: 143px; border-bottom: 1px solid #999; flex: none; }
.tools { display: flex; gap: 13px; padding: 8px 0 0 11px; }
.tools svg { width: 16px; height: 16px; overflow: visible; }
.p2 { margin-top: 9px; }
.pbox { flex: 1; min-height: 0; overflow: hidden; border: solid #777; border-width: 1px 0 0 2px; display: flex; margin-top: 1px; }
.params { width: 273px; flex: none; align-self: flex-start; table-layout: fixed; border-collapse: separate; border-spacing: 0; margin-left: 1px; }
.params th { background: #ff8422; color: #fff; font-weight: 400; padding: 0; height: 13px; line-height: 12px; border-right: 1px solid #ccc; border-bottom: 1px solid #aaa; }
.params td { height: 15px; line-height: 14px; padding: 0; border: solid #c0c0c0; border-width: 0 1px 1px 0; background: #fff; white-space: nowrap; overflow: hidden; }
.params td:last-child { padding-left: 2px; border-right: 0; }
.params .g td { background: #f0f0f0; }
.params input { margin-left: 2px; margin-top: 1px; }
.r { display: flex; align-items: center; height: 14px; font-size: 13px; }
.r.long { font-size: 12px; }
.l1 { padding-left: 1px; }
.l2 { padding-left: 25px; }
.l3 { padding-left: 53px; gap: 1px; }
.l3 svg { width: 7px; height: 11px; }
.nob { width: 7px; }
.lk { width: 14px; height: 14px; margin-right: 2px; color: #228; }
.lk.dim { opacity: .5; }
.box { width: 11px; height: 11px; border: 1px solid #222; background: #fff; line-height: 9px; font-size: 11px; margin-right: 5px; display: flex; justify-content: center; overflow: hidden; flex: none; }
.v { display: flex; margin-left: -2px; height: 14px; }
.v button { width: 96px; height: 14px; line-height: 13px; background: #eee; border: solid #888; border-width: 0 2px 1px 0; flex: none; }
.v svg { width: 10px; height: 13px; }
.params .num { text-align: right; padding-right: 13px; }
.pthumb { width: 2px; height: 220px; background: #888; margin: 16px 0 0 8px; }
.tabs { flex: none; height: 16px; padding-top: 2px; overflow: hidden; }
.tabs button { background: #fafafa; border: 1px solid #ddd; width: 79px; height: 20px; line-height: 16px; color: #111; white-space: nowrap; }

/* model view */
.view { flex: 1; min-width: 0; position: relative; background: #e4e4e4; border: solid #888; border-width: 2px 0 0 2px; overflow: hidden; }
.scene { position: absolute; left: 0; top: 0; width: 564px; height: 641px; }
.mtext { font: 300 18px Roboto, sans-serif; fill: #d8202c; }
.ltext { font: 12px "Noto Sans", sans-serif; text-anchor: middle; fill: #111; }
.ax { font: 15px "Liberation Sans", sans-serif; }
.bars { position: relative; display: flex; gap: 31px; padding: 10px 0 0 14px; }
.bars .bar { height: 27px; }
.opts { position: relative; display: flex; flex-direction: column; align-items: flex-start; gap: 6px; padding: 14px 0 0 41px; }
.pill { height: 22px; background: #f8f8f8; border: 1px solid #ccc; border-radius: 5px; padding: 0 5px; display: flex; align-items: center; gap: 9px; white-space: nowrap; }
.pill svg { width: 8px; height: 8px; }
.pill.name { padding: 0 9px; }
.pill.plain { font-size: 13px; }
.pill.open { gap: 1px; outline: 1px solid #ddd; outline-offset: -3px; }
.drop { position: relative; }
.pop { position: absolute; z-index: 2; left: 6px; top: 20px; width: 213px; margin: 0; padding: 0 3px 5px; list-style: none; background: #f9f9f9; border: 3px solid #f58535; }
.pop li { height: 22px; line-height: 22px; display: flex; border-radius: 3px; white-space: nowrap; }
.pop i { width: 32px; padding-left: 9px; }
.pop .hover { background: #efefef; }
.pointer { position: absolute; z-index: 3; left: 164px; top: 53px; width: 13px; height: 19px; }
```
